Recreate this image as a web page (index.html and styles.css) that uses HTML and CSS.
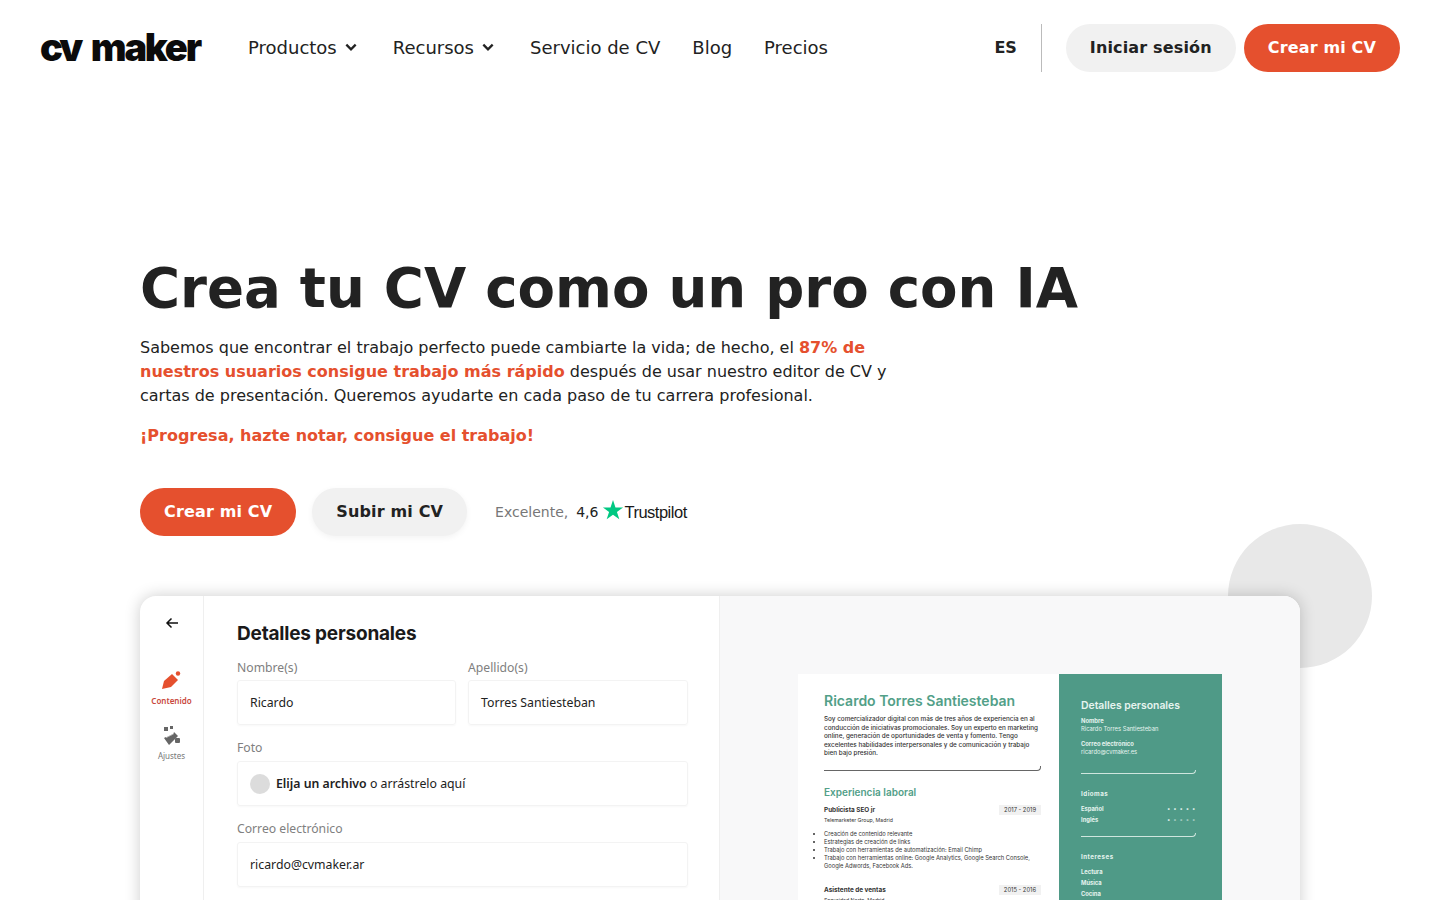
FILE: index.html
```html
<!DOCTYPE html>
<html lang="es">

<head>
	<meta charset="UTF-8" />
	<meta name="viewport" content="width=device-width, initial-scale=1.0" />
	<title>CV Maker</title>
	<link rel="stylesheet" href="styles.css">
</head>

<body>
	<div class="page">
		<header class="header">
			<a class="logo" href="#"><span class="logo-cv">cv</span><span>maker</span></a>
			<nav class="nav">
				<a href="#">Productos
					<svg class="chevron" viewBox="0 0 12 12"><path d="M2 4l4 4 4-4" /></svg>
				</a>
				<a href="#">Recursos
					<svg class="chevron" viewBox="0 0 12 12"><path d="M2 4l4 4 4-4" /></svg>
				</a>
				<a href="#">Servicio de CV</a>
				<a href="#">Blog</a>
				<a href="#">Precios</a>
			</nav>
			<div class="header-right">
				<span class="lang">ES</span>
				<span class="divider"></span>
				<a class="btn btn-grey" href="#">Iniciar sesión</a>
				<a class="btn btn-red" href="#">Crear mi CV</a>
			</div>
		</header>

		<main class="hero">
			<h1>Crea tu CV como un pro con IA</h1>
			<p class="intro">Sabemos que encontrar el trabajo perfecto puede cambiarte la vida; de hecho, el <strong>87% de
					nuestros usuarios consigue trabajo más rápido</strong> después de usar nuestro editor de CV y cartas de
				presentación. Queremos ayudarte en cada paso de tu carrera profesional.</p>
			<p class="tagline">¡Progresa, hazte notar, consigue el trabajo!</p>

			<div class="actions">
				<a class="btn btn-red" href="#">Crear mi CV</a>
				<a class="btn btn-grey btn-shadow" href="#">Subir mi CV</a>
				<div class="rating">
					<span class="rating-word">Excelente,</span>
					<span class="rating-score">4,6</span>
					<svg class="tp-star" viewBox="0 0 24 24"><path d="M12 1l2.700 8.200H23l-6.700 4.900 2.600 8.100-6.900-5-6.900 5 2.600-8.100L1 9.200h8.300z" /></svg>
					<span class="tp-name">Trustpilot</span>
				</div>
			</div>

			<div class="mock-wrap">
				<div class="circle"></div>
				<div class="mock">
					<aside class="mock-side">
						<svg class="back" viewBox="0 0 16 16"><path d="M14 8H3M7.500 3.500L3 8l4.500 4.500" /></svg>
						<div class="side-item side-active">
							<svg viewBox="0 0 20 20"><path d="M1 19l2-8 8-7 6 6-7 7z" /><circle cx="17" cy="3.500" r="2.200" /></svg>
							<span>Contenido</span>
						</div>
						<div class="side-item">
							<svg viewBox="0 0 20 20"><path d="M2 13l2-1 1 1 1-2 1 1 1-2 1 1 1-2 1 1 1-3 4 4-9 9z" /><rect x="2" y="2" width="4" height="4" /><rect x="8" y="1" width="3" height="3" /><rect x="13" y="13" width="5" height="5" rx="1" /></svg>
							<span>Ajustes</span>
						</div>
					</aside>

					<section class="mock-form">
						<h2>Detalles personales</h2>
						<div class="form-row">
							<div class="form-field">
								<label>Nombre(s)</label>
								<div class="form-input">Ricardo</div>
							</div>
							<div class="form-field">
								<label>Apellido(s)</label>
								<div class="form-input">Torres Santiesteban</div>
							</div>
						</div>
						<div class="form-field">
							<label>Foto</label>
							<div class="form-input form-photo">
								<span class="photo-dot"></span>
								<span><b>Elija un archivo</b> o arrástrelo aquí</span>
							</div>
						</div>
						<div class="form-field">
							<label>Correo electrónico</label>
							<div class="form-input">ricardo@cvmaker.ar</div>
						</div>
					</section>

					<section class="mock-preview">
						<div class="resume">
							<div class="resume-main">
								<h3>Ricardo Torres Santiesteban</h3>
								<p class="summary">Soy comercializador digital con más de tres años de experiencia en al conducción de iniciativas promocionales. Soy un experto en marketing online, generación de oportunidades de venta y fomento. Tengo excelentes habilidades interpersonales y de comunicación y trabajo bien bajo presión.</p>
								<div class="rule"></div>
								<h4>Experiencia laboral</h4>
								<div class="job-head">
									<b>Publicista SEO jr</b>
									<span class="years">2017 - 2019</span>
								</div>
								<div class="company">Telemarketer Group, Madrid</div>
								<ul>
									<li>Creación de contenido relevante</li>
									<li>Estrategias de creación de links</li>
									<li>Trabajo con herramientas de automatización: Email Chimp</li>
									<li>Trabajo con herramientas online: Google Analytics, Google Search Console, Google Adwords, Facebook Ads.</li>
								</ul>
								<div class="job-head job-second">
									<b>Asistente de ventas</b>
									<span class="years">2015 - 2016</span>
								</div>
								<div class="company">Seguridad Norte, Madrid</div>
							</div>
							<div class="resume-side">
								<h5>Detalles personales</h5>
								<div class="info"><b>Nombre</b>Ricardo Torres Santiesteban</div>
								<div class="info"><b>Correo electrónico</b>ricardo@cvmaker.es</div>
								<div class="rule rule-light"></div>
								<h6>Idiomas</h6>
								<div class="lang-row"><b>Español</b><span class="dots">• • • • •</span></div>
								<div class="lang-row"><b>Inglés</b><span class="dots">• <i>• • • •</i></span></div>
								<div class="rule rule-light rule-second"></div>
								<h6>Intereses</h6>
								<div class="lang-row"><b>Lectura</b></div>
								<div class="lang-row"><b>Música</b></div>
								<div class="lang-row"><b>Cocina</b></div>
							</div>
						</div>
					</section>
				</div>
			</div>
		</main>
	</div>
</body>

</html>
```

FILE: styles.css
```css
* {
	box-sizing: border-box;
}

body {
	margin: 0;
	font-family: 'DejaVu Sans', sans-serif;
	color: #222;
	background: #fff;
}

a {
	color: inherit;
	text-decoration: none;
}

.page {
	height: 100vh;
	overflow: hidden;
}

/* header */
.header {
	display: flex;
	align-items: center;
	height: 96px;
	padding: 0 40px;
}

.logo {
	display: flex;
	justify-content: space-between;
	width: 160px;
	padding-bottom: 2px;
	font-family: 'Inter', sans-serif;
	font-size: 38px;
	font-weight: 900;
	letter-spacing: -2.200px;
	color: #0b0b0b;
	line-height: 1;
}

.logo-cv {
	letter-spacing: -3px;
}

.nav {
	display: flex;
	align-items: center;
	gap: 32px;
	margin-left: 48px;
	padding-bottom: 2px;
	font-size: 18px;
}

.nav a {
	display: flex;
	align-items: center;
	gap: 7px;
}

.chevron {
	width: 14px;
	height: 14px;
	margin-right: 3px;
	fill: none;
	stroke: #222;
	stroke-width: 2;
}

.header-right {
	display: flex;
	align-items: center;
	margin-left: auto;
}

.lang {
	padding-bottom: 2px;
	font-size: 16px;
	font-weight: bold;
}

.divider {
	width: 1px;
	height: 48px;
	margin: 0 24px;
	background: #bbb;
}

.btn {
	display: inline-block;
	height: 48px;
	padding: 0 24px;
	border-radius: 24px;
	font-size: 16px;
	font-weight: bold;
	letter-spacing: 0.15px;
	line-height: 47px;
}

.btn-grey {
	background: #f1f1f1;
}

.btn-red {
	background: #e5502e;
	color: #fff;
}

.header-right .btn-red {
	margin-left: 8px;
}

.btn-shadow {
	box-shadow: 0 2px 6px rgba(0, 0, 0, 0.05);
}

/* hero */
.hero {
	padding: 0 140px;
}

h1 {
	margin: 156px 0 0;
	font-size: 54.600px;
	line-height: 72px;
	color: #222;
	white-space: nowrap;
}

.intro {
	width: 770px;
	margin: 12px 0 0;
	font-size: 16px;
	line-height: 24px;
}

.intro strong,
.tagline {
	color: #e5502e;
	font-weight: bold;
}

.tagline {
	margin: 16px 0 0;
	font-size: 16px;
	line-height: 24px;
}

.actions {
	display: flex;
	align-items: center;
	gap: 16px;
	margin-top: 40px;
}

.rating {
	display: flex;
	align-items: center;
	margin-left: 12px;
	font-size: 14px;
}

.rating-word {
	color: #777;
}

.rating-score {
	margin-left: 8px;
}

.tp-star {
	width: 22px;
	height: 22px;
	margin: -4px 0 0 4px;
	fill: #00c882;
}

.tp-name {
	font-family: 'Liberation Sans', sans-serif;
	font-size: 16.500px;
	letter-spacing: -0.5px;
	color: #191919;
}

/* product mockup */
.mock-wrap {
	position: relative;
	margin-top: 60px;
}

.circle {
	position: absolute;
	top: -72px;
	right: -72px;
	width: 144px;
	height: 144px;
	border-radius: 50%;
	background: #e8e8e8;
}

.mock {
	position: relative;
	display: flex;
	width: 1160px;
	height: 500px;
	border-radius: 16px;
	background: #fff;
	box-shadow: 0 0 16px rgba(0, 0, 0, 0.2);
	overflow: hidden;
	font-family: 'Noto Sans', sans-serif;
}

.mock-side {
	display: flex;
	flex-direction: column;
	align-items: center;
	width: 64px;
	padding-top: 19px;
	border-right: 1px solid #efefef;
}

.back {
	width: 16px;
	height: 16px;
	fill: none;
	stroke: #111;
	stroke-width: 1.500;
}

.side-item {
	display: flex;
	flex-direction: column;
	align-items: center;
	margin-bottom: 19px;
	font-size: 8px;
	color: #777;
}

.side-item svg {
	width: 20px;
	height: 20px;
	margin-bottom: 5px;
	fill: #666;
}

.side-active {
	margin-top: 39px;
	color: #c9483c;
	font-weight: 600;
}

.side-active svg {
	fill: #e5502e;
}

.mock-form {
	width: 516px;
	padding: 25px 31px 0 33px;
	border-right: 1px solid #efefef;
}

.mock-form h2 {
	margin: 0 0 12px;
	font-family: 'Inter', sans-serif;
	font-size: 19px;
	font-weight: 700;
	line-height: 26px;
	letter-spacing: -0.2px;
	color: #1a1a1a;
}

.form-row {
	display: grid;
	grid-template-columns: 219px 220px;
	gap: 12px;
}

.form-field {
	margin-bottom: 14px;
}

.form-field label {
	display: block;
	height: 22px;
	font-size: 12.200px;
	line-height: 18px;
	color: #808080;
}

.form-row label {
	height: 21px;
}

.form-input {
	display: flex;
	align-items: center;
	height: 45px;
	padding: 0 12px;
	border: 1px solid #f3f3f3;
	border-radius: 3px;
	box-shadow: 0 1px 2px rgba(0, 0, 0, 0.03);
	font-size: 12.300px;
	color: #222;
}

.form-photo {
	gap: 6px;
}

.form-photo b {
	font-weight: 600;
}

.photo-dot {
	width: 20px;
	height: 20px;
	border-radius: 50%;
	background: #dcdcdc;
}

.mock-preview {
	flex: 1;
	padding: 78px 78px 0;
	background: #f8f8f9;
}

/* resume inside the mockup */
.resume {
	display: flex;
	width: 424px;
	font-family: 'Inter', sans-serif;
	color: #333;
}

.resume-main {
	width: 261px;
	height: 430px;
	padding: 18px 18px 0 26px;
	background: #fff;
}

.resume-main h3 {
	margin: 0;
	font-size: 14px;
	font-weight: 600;
	line-height: 17px;
	color: #52a088;
}

.summary {
	margin: 6px 0 0;
	font-size: 6.350px;
	font-weight: 500;
	line-height: 8.600px;
}

.rule {
	height: 5px;
	margin-top: 8px;
	border-bottom: 1px solid #666;
	border-right: 1px solid #666;
	border-bottom-right-radius: 4px;
}

.resume-main h4 {
	margin: 15px 0 0;
	font-size: 10px;
	font-weight: 600;
	line-height: 12px;
	color: #52a088;
}

.job-head {
	display: flex;
	justify-content: space-between;
	align-items: center;
	margin-top: 7px;
	font-size: 6.400px;
}

.years {
	height: 10px;
	padding: 0 5px;
	background: #f1f1f1;
	font-size: 5.800px;
	line-height: 10px;
}

.company {
	margin-top: 2px;
	font-size: 5.200px;
	line-height: 7px;
}

.resume-main ul {
	margin: 6px 0 0;
	padding: 0;
	font-size: 5.750px;
	line-height: 8px;
}

.job-second {
	margin-top: 15px;
}

.resume-side {
	width: 163px;
	height: 430px;
	padding: 26px 26px 0 22px;
	background: #4f9a87;
	color: #e6f4ef;
}

.resume-side h5 {
	margin: 0 0 5px;
	font-size: 10.400px;
	font-weight: 600;
	line-height: 12px;
}

.info {
	margin-bottom: 8px;
	font-size: 5.800px;
	line-height: 7.500px;
}

.info b {
	display: block;
}

.rule-light {
	height: 4px;
	margin-top: 15px;
	border-color: #cfe6de;
}

.rule-second {
	margin-top: 8px;
}

.resume-side h6 {
	margin: 16px 0 4.500px;
	font-size: 6.200px;
	font-weight: 700;
	line-height: 8px;
	letter-spacing: 0.5px;
}

.lang-row {
	display: flex;
	justify-content: space-between;
	font-size: 5.800px;
	line-height: 11.300px;
}

.dots {
	font-size: 6px;
	letter-spacing: 0.6px;
}

.dots i {
	font-style: normal;
	opacity: 0.6;
}
```
